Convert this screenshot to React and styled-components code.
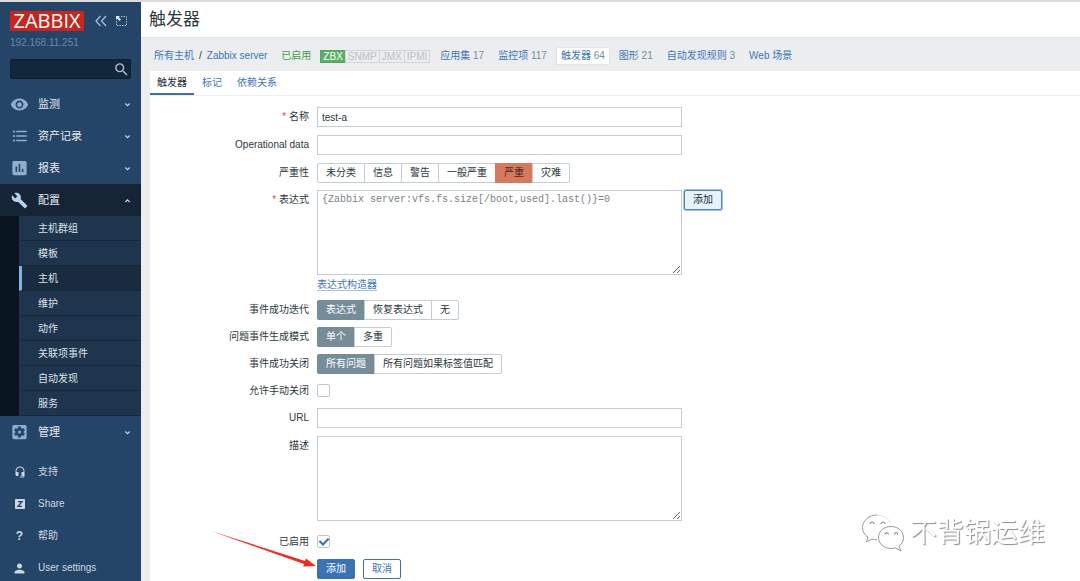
import React, { useState } from 'react'
import styled, { createGlobalStyle, css } from 'styled-components'
import {
  MdRemoveRedEye,
  MdFormatListBulleted,
  MdAssessment,
  MdBuild,
  MdSettingsApplications,
  MdHeadsetMic,
  MdPerson,
  MdSearch,
} from 'react-icons/md'

const GlobalStyle = createGlobalStyle`
  * {
    box-sizing: border-box;
  }
  body {
    margin: 0;
    background: #ebedef;
    color: #2c383e;
    font-family: "Liberation Sans", "Noto Sans CJK SC", sans-serif;
    font-size: 10px;
    line-height: 14px;
  }
  button, input, textarea {
    font: inherit;
    color: inherit;
    margin: 0;
  }
  a {
    color: #3f76b8;
    text-decoration: none;
  }
`

const Page = styled.div`
  display: flex;
  height: 100vh;
  border-top: 2px solid #d9dad9;
  overflow: hidden;
`

/* sidebar */

const Sidebar = styled.aside`
  flex: none;
  width: 141px;
  background: #254568;
  overflow: hidden;
`
const SidebarHeader = styled.div`
  display: flex;
  flex-direction: column;
  height: 86px;
  padding: 9px 10px 0;
`
const LogoRow = styled.div`
  display: flex;
  align-items: center;
  justify-content: space-between;
  padding-right: 4px;
`
const Logo = styled.a`
  width: 74px;
  height: 20px;
  background: #c8261c;
  color: #fff;
  font-family: "Open Sans", sans-serif;
  font-size: 20px;
  line-height: 20px;
  text-align: center;
`
const HeaderButtons = styled.div`
  display: flex;
  gap: 8px;
`
const IconButton = styled.button`
  display: flex;
  padding: 0;
  border: 0;
  background: none;
  color: #a9bfd4;
`
const ServerName = styled.div`
  margin-top: 5px;
  color: #6d87a1;
`
const Search = styled.form`
  display: flex;
  align-items: center;
  height: 20px;
  margin-top: 9px;
  padding-left: 4px;
  background: #14263a;
  border: 1px solid #0f1f30;
  border-radius: 2px;
`
const SearchInput = styled.input`
  flex: 1;
  min-width: 0;
  border: 0;
  background: none;
  color: #fff;
  outline: none;
`
const MenuList = styled.ul`
  margin: 0;
  padding: 0;
  list-style: none;
`
const MenuLink = styled.a`
  display: flex;
  align-items: center;
  height: 32px;
  padding: 0 10px;
  color: #e3eaf1;
  font-size: 11px;
  background: ${props => props.$open ? '#152535' : 'none'};
  svg {
    color: ${props => props.$open ? '#b5d3ee' : '#8faecb'};
  }
`
const MenuIcon = styled.span`
  display: flex;
  justify-content: center;
  width: 19px;
  margin-right: 9px;
`
const MenuText = styled.span`
  flex: 1;
`
const SubMenu = styled.ul`
  margin: 0;
  padding: 0 0 0 19px;
  list-style: none;
  background: #0a161f;
`
const SubLink = styled.a`
  display: block;
  height: 25px;
  padding-left: 16px;
  border-left: 3px solid ${props => props.$active ? '#7fb5e6' : '#1f354d'};
  border-bottom: 1px solid #14283b;
  background: ${props => props.$active ? '#182b3f' : '#1f354d'};
  color: #dbe3ea;
  line-height: 26px;
`
const FooterMenu = styled(MenuList)`
  padding-top: 8px;
`
const FooterLink = styled(MenuLink)`
  font-size: 10px;
  color: #ccd7e1;
  svg {
    color: #ccd7e1;
  }
`
const Question = styled.b`
  color: #ccd7e1;
  font-size: 12px;
`

/* content */

const Main = styled.main`
  flex: 1;
  min-width: 0;
  display: flex;
  flex-direction: column;
`
const Title = styled.h1`
  flex: none;
  margin: 0;
  padding: 0 8px;
  height: 36px;
  background: #fff;
  border-bottom: 1px solid #dfe3e5;
  font-size: 17px;
  font-weight: normal;
  line-height: 36px;
`
const HostNav = styled.nav`
  flex: none;
  display: flex;
  align-items: center;
  height: 33px;
  padding: 3px 9px 0;
  gap: 6px;
`
const NavItem = styled.span`
  padding: 1px 4px;
  white-space: nowrap;
  color: #768d99;
  ${props => props.$selected && css`
    background: #fff;
    box-shadow: 0 0 0 1px #e2e6e8;
  `}
`
const Crumbs = styled.span`
  display: flex;
  gap: 5px;
  padding: 0 4px;
  white-space: nowrap;
`
const Enabled = styled.span`
  padding: 0 4px;
  color: #429e47;
`
const Interfaces = styled.span`
  display: flex;
`
const Interface = styled.span`
  padding: 0 2px;
  border: 1px solid ${props => props.$on ? '#4fa85b' : '#d0d6d9'};
  margin-left: -1px;
  background: ${props => props.$on ? '#59b065' : 'none'};
  color: ${props => props.$on ? '#fff' : '#b9c3c8'};
  line-height: 11px;
`
const Panel = styled.section`
  flex: 1;
  margin-left: 9px;
  background: #fff;
`
const Tabs = styled.div`
  display: flex;
  gap: 1px;
  height: 25px;
  border-bottom: 1px solid #ebedef;
`
const Tab = styled.a`
  padding: 0 7px;
  line-height: 24px;
  ${props => props.$active && css`
    color: #1f2c33;
    border-bottom: 2px solid #3b72b4;
  `}
`
const Form = styled.form`
  display: flex;
  flex-direction: column;
  gap: 7px;
  padding: 11px 0;
`
const Group = styled.div`
  display: flex;
  flex-direction: column;
  gap: ${props => props.$tight ? '7px' : '8px'};
`
const Row = styled.div`
  display: grid;
  grid-template-columns: 159px 1fr;
  column-gap: 8px;
  min-height: 20px;
`
const Label = styled.label`
  text-align: right;
  line-height: 20px;
  ${props => props.$required && css`
    &::before {
      content: "* ";
      color: #e04a42;
    }
  `}
`
const Field = styled.div`
  display: flex;
  flex-wrap: wrap;
  align-items: flex-start;
  column-gap: 2px;
`
const TextInput = styled.input`
  width: 365px;
  height: 20px;
  padding: 0 4px;
  border: 1px solid #c4cdd2;
  background: #fff;
`
const TextArea = styled.textarea`
  width: 365px;
  height: 85px;
  margin-bottom: 3px;
  padding: 2px 4px;
  border: 1px solid #c4cdd2;
  ${props => props.$mono && css`
    color: #7b8184;
    font-family: "Liberation Mono", monospace;
  `}
`
const Segments = styled.div`
  display: flex;
  height: 20px;
  border: 1px solid #c4cdd2;
  border-radius: 2px;
`
const Segment = styled.label`
  display: flex;
  padding: 0 8px;
  line-height: 18px;
  & + & {
    border-left: 1px solid #c4cdd2;
  }
  &:has(input:checked) {
    margin: -1px 0;
    border-color: ${props => props.$color};
    line-height: 20px;
    background: ${props => props.$color};
    color: ${props => props.$ink};
  }
  &:first-child:has(input:checked) {
    margin-left: -1px;
    padding-left: 9px;
    border-radius: 2px 0 0 2px;
  }
  input {
    appearance: none;
    width: 0;
    height: 0;
  }
`
const Checkbox = styled.input`
  appearance: none;
  display: grid;
  place-items: center;
  width: 13px;
  height: 13px;
  margin: 3px 0 0;
  border: 1px solid #bcc8ce;
  border-radius: 2px;
  background: #fff;
  &:checked::after {
    content: "";
    width: 4px;
    height: 7px;
    margin-bottom: 2px;
    border: solid #2f6eb5;
    border-width: 0 2px 2px 0;
    transform: rotate(45deg);
  }
`
const Button = styled.button`
  height: 20px;
  padding: 0 8px;
  border: 1px solid #3b72b4;
  border-radius: 2px;
  background: ${props => props.$primary ? '#3b72b4' : '#fff'};
  color: ${props => props.$primary ? '#fff' : '#3b72b4'};
  line-height: 18px;
`
const FocusedButton = styled(Button)`
  border-color: #4f83cb;
  background: #e8f2fc;
  color: #1f2c33;
  box-shadow: 0 0 0 1px #a3c1e9;
`
const BuilderLink = styled.div`
  flex-basis: 100%;
  height: 15px;
  a {
    border-bottom: 1px solid #a9c3e0;
  }
`
const Actions = styled.div`
  position: relative;
  display: flex;
  gap: 8px;
`
const Arrow = styled.svg`
  position: absolute;
  left: -106px;
  top: -29px;
  pointer-events: none;
`
const Watermark = styled.div`
  position: fixed;
  right: 35px;
  bottom: 28px;
  display: flex;
  align-items: center;
  gap: 5px;
  color: #fff;
  font-size: 27px;
  line-height: 40px;
  text-shadow: 1px 1px 1px #8c8c8c;
`

const mainMenu = [
  { text: '监测', icon: <MdRemoveRedEye size={19} /> },
  { text: '资产记录', icon: <MdFormatListBulleted size={18} /> },
  { text: '报表', icon: <MdAssessment size={20} /> },
  {
    text: '配置',
    icon: <MdBuild size={17} />,
    open: true,
    items: ['主机群组', '模板', '主机', '维护', '动作', '关联项事件', '自动发现', '服务'],
  },
  { text: '管理', icon: <MdSettingsApplications size={20} /> },
]

const hostTabs = [
  { text: '应用集', count: 17 },
  { text: '监控项', count: 117 },
  { text: '触发器', count: 64, selected: true },
  { text: '图形', count: 21 },
  { text: '自动发现规则', count: 3 },
  { text: 'Web 场景' },
]

const Chevron = ({ up }) => (
  <svg width="7" height="7" viewBox="0 0 7 7" fill="none" stroke="#c3d3e2" strokeWidth="1.1">
    <path d={up ? 'M1.300 5 3.500 2.800 5.700 5' : 'M1.300 2.500 3.500 4.700 5.700 2.500'} />
  </svg>
)

const CollapseIcon = () => (
  <svg width="12" height="12" viewBox="0 0 12 12" fill="none" stroke="currentColor" strokeWidth="1.3">
    <path d="M5.500 1 1 6l4.500 5M11 1 6.500 6l4.500 5" />
  </svg>
)

const HideIcon = () => (
  <svg width="12" height="12" viewBox="0 0 12 12" fill="none" stroke="currentColor">
    <path d="M6 1.500h5.500v9H1.500V6" strokeDasharray="1.500 1" />
    <path d="M1 1h4L3.800 2.200 6 4.500 4.500 6 2.200 3.800 1 5z" fill="#dde7f0" stroke="none" />
  </svg>
)

const ShareIcon = () => (
  <svg width="10" height="10" viewBox="0 0 10 10">
    <rect width="10" height="10" rx="1" fill="currentColor" />
    <path d="M3 2.700h4L3 7.300h4" fill="none" stroke="#254568" strokeWidth="1.300" />
  </svg>
)

const WechatIcon = () => (
  <svg width="44" height="40" viewBox="0 0 44 40" fill="#fff" stroke="#8d8d8d" strokeWidth="0.9">
    <path d="M16 2C8 2 1.500 7.500 1.500 14.500c0 4 2 7.500 5.500 9.700L5.500 29l5.500-3c1.600.5 3.300.8 5 .8 8 0 14.500-5.500 14.500-12.300S24 2 16 2z" stroke="none" />
    <path d="M16 2C8 2 1.500 7.500 1.500 14.500c0 4 2 7.500 5.500 9.700L5.500 29l5.500-3c1.600.5 3.300.8 5 .8" fill="none" />
    <path d="M16 2c6 0 11.500 3 13.600 8" fill="none" strokeOpacity="0.3" />
    <path d="M30 13.500c-7 0-12.500 4.800-12.500 11S23 35.500 30 35.500c1.500 0 3-.2 4.300-.7l5.700 3-2.200-4.600c3-2 4.700-5 4.700-8.700 0-6.200-5.500-11-12.500-11z" />
    <g fill="none" strokeWidth="1.200">
      <path d="M9 11a2 2 0 0 1 4 0M20 11a2 2 0 0 1 4 0M24 21.500a1.700 1.700 0 0 1 3.400 0M33.500 21.500a1.700 1.700 0 0 1 3.400 0" />
    </g>
  </svg>
)

const SegmentedControl = ({ name, options, initial, color = '#768d99', ink = '#fff' }) => {
  const [value, setValue] = useState(initial)
  return (
    <Segments role="radiogroup" aria-labelledby={name + '-label'}>
      {options.map(option => (
        <Segment key={option} $color={color} $ink={ink}>
          <input
            type="radio"
            name={name}
            checked={value === option}
            onChange={() => setValue(option)}
          />
          {option}
        </Segment>
      ))}
    </Segments>
  )
}

const SideMenu = () => {
  return (
    <Sidebar>
      <SidebarHeader>
        <LogoRow>
          <Logo href="#">ZABBIX</Logo>
          <HeaderButtons>
            <IconButton type="button" aria-label="Collapse sidebar"><CollapseIcon /></IconButton>
            <IconButton type="button" aria-label="Hide sidebar"><HideIcon /></IconButton>
          </HeaderButtons>
        </LogoRow>
        <ServerName>192.168.11.251</ServerName>
        <Search>
          <SearchInput type="text" aria-label="Search" />
          <IconButton type="button" aria-label="Search"><MdSearch size={17} /></IconButton>
        </Search>
      </SidebarHeader>
      <MenuList>
        {mainMenu.map(item => (
          <li key={item.text}>
            <MenuLink href="#" $open={item.open}>
              <MenuIcon>{item.icon}</MenuIcon>
              <MenuText>{item.text}</MenuText>
              <Chevron up={item.open} />
            </MenuLink>
            {item.items && (
              <SubMenu>
                {item.items.map(sub => (
                  <li key={sub}>
                    <SubLink href="#" $active={sub === '主机'}>{sub}</SubLink>
                  </li>
                ))}
              </SubMenu>
            )}
          </li>
        ))}
      </MenuList>
      <FooterMenu>
        <li><FooterLink href="#"><MenuIcon><MdHeadsetMic size={12} /></MenuIcon>支持</FooterLink></li>
        <li><FooterLink href="#"><MenuIcon><ShareIcon /></MenuIcon>Share</FooterLink></li>
        <li><FooterLink href="#"><MenuIcon><Question>?</Question></MenuIcon>帮助</FooterLink></li>
        <li><FooterLink href="#"><MenuIcon><MdPerson size={15} /></MenuIcon>User settings</FooterLink></li>
      </FooterMenu>
    </Sidebar>
  )
}

const TriggerForm = () => {
  return (
    <Form onSubmit={e => e.preventDefault()}>
      <Group>
        <Row>
          <Label htmlFor="name" $required>名称</Label>
          <Field><TextInput id="name" defaultValue="test-a" /></Field>
        </Row>
        <Row>
          <Label htmlFor="opdata">Operational data</Label>
          <Field><TextInput id="opdata" /></Field>
        </Row>
        <Row>
          <Label as="span" id="severity-label">严重性</Label>
          <Field>
            <SegmentedControl
              name="severity"
              options={['未分类', '信息', '警告', '一般严重', '严重', '灾难']}
              initial="严重"
              color="#d6795d"
              ink="#4a2a20"
            />
          </Field>
        </Row>
      </Group>
      <Group $tight>
        <Row>
          <Label htmlFor="expression" $required>表达式</Label>
          <Field>
            <TextArea
              id="expression"
              $mono
              spellCheck={false}
              defaultValue="{Zabbix server:vfs.fs.size[/boot,used].last()}=0"
            />
            <FocusedButton type="button">添加</FocusedButton>
            <BuilderLink><a href="#">表达式构造器</a></BuilderLink>
          </Field>
        </Row>
        <Row>
          <Label as="span" id="recovery-label">事件成功迭代</Label>
          <Field><SegmentedControl name="recovery" options={['表达式', '恢复表达式', '无']} initial="表达式" /></Field>
        </Row>
        <Row>
          <Label as="span" id="mode-label">问题事件生成模式</Label>
          <Field><SegmentedControl name="mode" options={['单个', '多重']} initial="单个" /></Field>
        </Row>
        <Row>
          <Label as="span" id="close-label">事件成功关闭</Label>
          <Field><SegmentedControl name="close" options={['所有问题', '所有问题如果标签值匹配']} initial="所有问题" /></Field>
        </Row>
        <Row>
          <Label htmlFor="manual">允许手动关闭</Label>
          <Field><Checkbox id="manual" type="checkbox" /></Field>
        </Row>
      </Group>
      <Group>
        <Row>
          <Label htmlFor="url">URL</Label>
          <Field><TextInput id="url" /></Field>
        </Row>
        <Row>
          <Label htmlFor="description">描述</Label>
          <Field><TextArea id="description" /></Field>
        </Row>
        <Row>
          <Label htmlFor="enabled">已启用</Label>
          <Field><Checkbox id="enabled" type="checkbox" defaultChecked /></Field>
        </Row>
      </Group>
      <Row>
        <span />
        <Actions>
          <Button type="submit" $primary>添加</Button>
          <Button type="button">取消</Button>
          <Arrow width="106" height="38" viewBox="0 0 106 38" fill="#f8281c">
            <path d="M0 1 94 31 95 28.500 105 36 92 36.500 93 34z" />
          </Arrow>
        </Actions>
      </Row>
    </Form>
  )
}

const App = () => {
  return (
    <Page>
      <GlobalStyle />
      <SideMenu />
      <Main>
        <Title>触发器</Title>
        <HostNav>
          <Crumbs>
            <a href="#">所有主机</a>
            <span>/</span>
            <a href="#">Zabbix server</a>
          </Crumbs>
          <Enabled>已启用</Enabled>
          <Interfaces>
            <Interface $on>ZBX</Interface>
            <Interface>SNMP</Interface>
            <Interface>JMX</Interface>
            <Interface>IPMI</Interface>
          </Interfaces>
          {hostTabs.map(tab => (
            <NavItem key={tab.text} $selected={tab.selected}>
              <a href="#">{tab.text}</a> {tab.count}
            </NavItem>
          ))}
        </HostNav>
        <Panel>
          <Tabs>
            <Tab href="#" $active>触发器</Tab>
            <Tab href="#">标记</Tab>
            <Tab href="#">依赖关系</Tab>
          </Tabs>
          <TriggerForm />
        </Panel>
      </Main>
      <Watermark>
        <WechatIcon />
        不背锅运维
      </Watermark>
    </Page>
  )
}

export default App
